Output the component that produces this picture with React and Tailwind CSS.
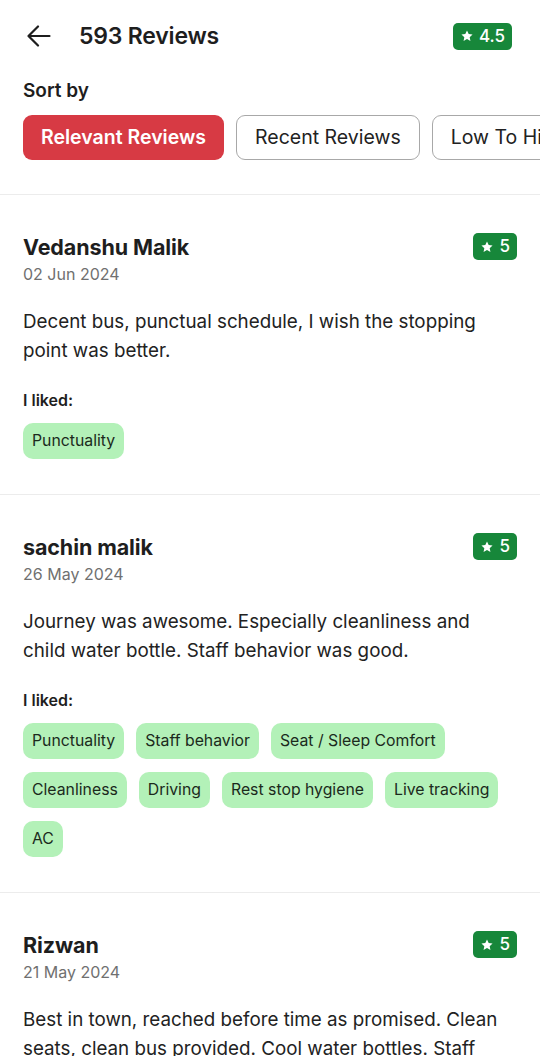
import React from 'react';

const reviews = [
  {
    name: 'Vedanshu Malik',
    date: '02 Jun 2024',
    rating: 5,
    text: 'Decent bus, punctual schedule, I wish the stopping point was better.',
    liked: ['Punctuality'],
  },
  {
    name: 'sachin malik',
    date: '26 May 2024',
    rating: 5,
    text: 'Journey was awesome. Especially cleanliness and child water bottle. Staff behavior was good.',
    liked: [
      'Punctuality',
      'Staff behavior',
      'Seat / Sleep Comfort',
      'Cleanliness',
      'Driving',
      'Rest stop hygiene',
      'Live tracking',
      'AC',
    ],
  },
  {
    name: 'Rizwan',
    date: '21 May 2024',
    rating: 5,
    text: 'Best in town, reached before time as promised. Clean seats, clean bus provided. Cool water bottles. Staff behavior was good and helpful throughout.',
    liked: ['Punctuality'],
  },
];

const sortOptions = ['Relevant Reviews', 'Recent Reviews', 'Low To High', 'High To Low'];

const Star = ({ className }) => (
  <svg className={className} viewBox="0 0 24 24" fill="currentColor">
    <path d="M12 2.5l2.9 6.1 6.6.8-4.9 4.6 1.3 6.6L12 17.3l-5.9 3.3 1.3-6.6-4.9-4.6 6.6-.8z" />
  </svg>
);

const RatingBadge = ({ value }) => (
  <div className="flex items-center gap-[5px] h-[27px] px-[7px] rounded-[5px] bg-[#17873a] text-white text-[17px] font-medium">
    <Star className="w-[14px] h-[14px]" />
    <span className="leading-none">{value}</span>
  </div>
);

const ReviewCard = ({ review }) => (
  <div className="border-t border-[#ececec] px-[23px] pt-[38px] pb-[35px]">
    <div className="flex items-start justify-between">
      <div>
        <div className="text-[21.5px] leading-[28px] font-bold text-[#1e1e1e] tracking-[-0.1px]">{review.name}</div>
        <div className="mt-[3px] text-[16px] leading-[20px] text-[#707070]">{review.date}</div>
      </div>
      <RatingBadge value={review.rating} />
    </div>
    <p className="mt-[24px] pr-[10px] text-[18.8px] leading-[28.5px] text-[#222]">{review.text}</p>
    <div className="mt-[25px] text-[16px] leading-[20px] font-semibold text-[#1e1e1e]">I liked:</div>
    <div className="mt-[13px] flex flex-wrap gap-x-[12px] gap-y-[13px]">
      {review.liked.map((tag) => (
        <span
          key={tag}
          className="h-[36px] px-[9px] flex items-center rounded-[10px] bg-[#b3f1b8] text-[15.8px] text-[#1b2a1c]"
        >
          {tag}
        </span>
      ))}
    </div>
  </div>
);

export default function App() {
  return (
    <div className="w-[540px] h-[1056px] overflow-hidden bg-white font-['Inter',sans-serif] text-[#1e1e1e]">
      <div className="h-[72px] flex items-center pl-[27px] pr-[28px]">
        <svg width="24" height="22" viewBox="0 0 24 22" fill="none" stroke="#1e1e1e" strokeWidth="2.2" strokeLinecap="round" strokeLinejoin="round">
          <path d="M22.5 11H1.5M11 1.5L1.5 11l9.5 9.5" />
        </svg>
        <h1 className="ml-[28px] text-[23px] font-semibold tracking-[-0.2px]">593 Reviews</h1>
        <div className="ml-auto">
          <RatingBadge value="4.5" />
        </div>
      </div>

      <div className="pl-[23px] pt-[7px] pb-[34px]">
        <div className="text-[19px] leading-[24px] font-semibold">Sort by</div>
        <div className="mt-[12px] flex gap-[12px] overflow-hidden">
          {sortOptions.map((opt, i) => (
            <button
              key={opt}
              className={`shrink-0 h-[45px] px-[18px] rounded-[9px] text-[19.5px] ${
                i === 0
                  ? 'bg-[#d73a44] text-white font-semibold'
                  : 'border border-[#a8a8a8] bg-white text-[#222]'
              }`}
            >
              {opt}
            </button>
          ))}
        </div>
      </div>

      {reviews.map((r) => (
        <ReviewCard key={r.name} review={r} />
      ))}
    </div>
  );
}
